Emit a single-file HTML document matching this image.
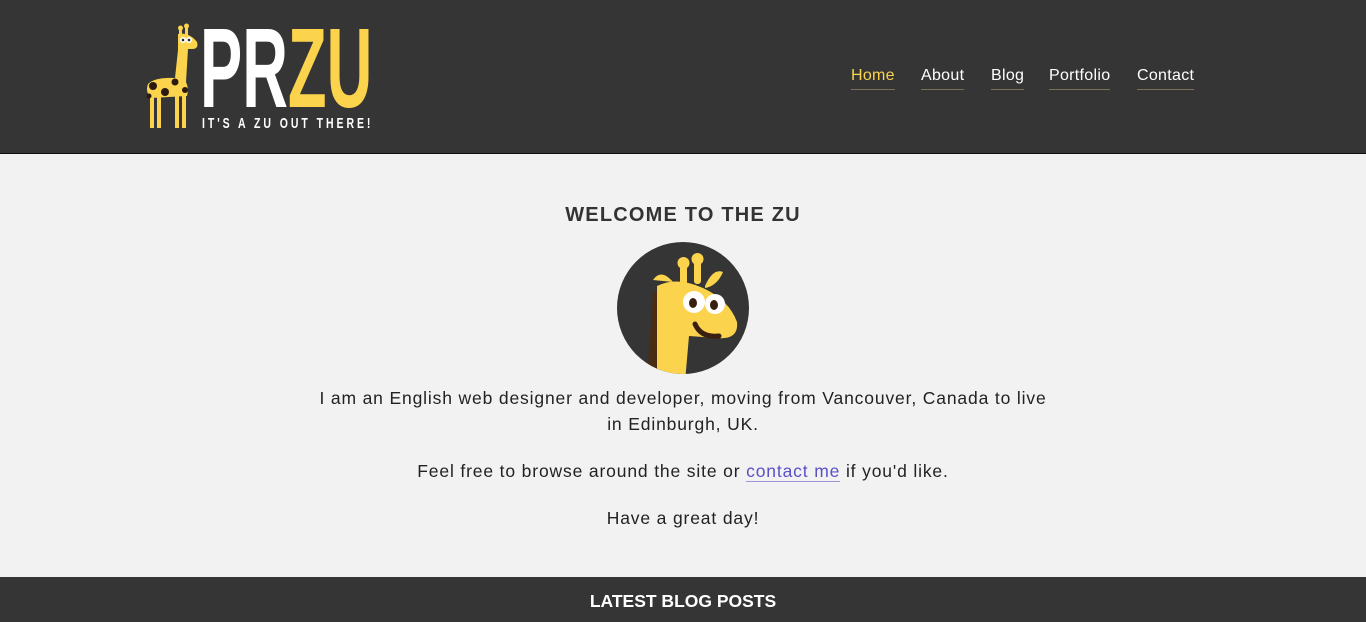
<!DOCTYPE html>
<html><head><meta charset="utf-8"><style>
*{margin:0;padding:0;box-sizing:border-box}
body{width:1366px;height:622px;overflow:hidden;background:#f2f2f2;font-family:"Liberation Sans",sans-serif;color:#222}
header{height:154px;background:#353535;border-bottom:1px solid #111;position:relative}
.logo{position:absolute;left:145px;top:22px}
.przu{position:absolute;left:200px;top:12px;font-size:113px;font-weight:bold;line-height:1;color:#fff;transform:scaleX(0.56);transform-origin:left top;white-space:nowrap}
.przu span{color:#fbd34d}
.tag{position:absolute;left:202px;top:115px;font-size:15px;font-weight:bold;color:#fff;letter-spacing:4.2px;white-space:nowrap;transform:scaleX(0.7);transform-origin:left top}
nav{position:absolute;top:67px;left:851px;font-size:16px;letter-spacing:0.3px}
nav a{position:absolute;color:#fff;text-decoration:none;border-bottom:1px solid #7a7055;padding-bottom:4px;white-space:nowrap}
h1{position:absolute;top:204px;width:100%;text-align:center;font-size:20px;font-weight:bold;color:#333;letter-spacing:1.2px}
.p{position:absolute;width:100%;text-align:center;font-size:17.5px;letter-spacing:0.85px;color:#222;line-height:26px;white-space:nowrap}
.p a{color:#5a50c8;text-decoration:none;border-bottom:1px solid #9a94d8}
footer{position:absolute;top:577px;left:0;width:1366px;height:45px;background:#353535;color:#fff;text-align:center;font-weight:bold;font-size:17.5px;padding-top:14px}
</style></head><body>
<header>
<svg class="logo" width="60" height="110" viewBox="0 0 60 110">
<g fill="#fbd34d">
<rect x="34" y="6" width="3" height="10"/><rect x="40" y="4" width="3" height="12"/>
<circle cx="35.5" cy="6" r="2.5"/><circle cx="41.5" cy="4" r="2.5"/>
<path d="M33 12 Q44 10 52 20 Q54 27 47 27 L43 27 L41 60 Q44 66 42 74 L6 76 Q0 70 3 62 Q10 55 30 56 L33 28 Z"/>
<rect x="5" y="72" width="4" height="34"/><rect x="12" y="72" width="4" height="34"/><rect x="30" y="72" width="4" height="34"/><rect x="37" y="72" width="4" height="34"/>
</g>
<g fill="#2a1a10"><circle cx="8" cy="64" r="4"/><circle cx="20" cy="70" r="4"/><circle cx="30" cy="60" r="3.5"/><circle cx="40" cy="68" r="3"/><circle cx="4" cy="74" r="2.5"/></g>
<circle cx="38" cy="18" r="3" fill="#fff"/><circle cx="44" cy="18" r="3" fill="#fff"/>
<circle cx="38" cy="18" r="1.3" fill="#222"/><circle cx="44" cy="18" r="1.3" fill="#222"/>
</svg>
<div class="przu">PR<span>ZU</span></div>
<div class="tag">IT'S A ZU OUT THERE!</div>
<nav>
<a style="left:0;color:#fbd34d">Home</a>
<a style="left:70px">About</a>
<a style="left:140px">Blog</a>
<a style="left:198px">Portfolio</a>
<a style="left:286px">Contact</a>
</nav>
</header>
<h1>WELCOME TO THE ZU</h1>
<svg style="position:absolute;left:617px;top:242px" width="132" height="132" viewBox="0 0 132 132">
<defs><clipPath id="c"><circle cx="66" cy="66" r="66"/></clipPath></defs>
<circle cx="66" cy="66" r="66" fill="#353535"/>
<g clip-path="url(#c)">
<path d="M36 50 L48 48 L40 140 L30 140 Z" fill="#4a2c12"/>
<g fill="#fbd34d">
<rect x="63" y="20" width="7" height="24" rx="3"/><rect x="77" y="16" width="7" height="26" rx="3"/>
<circle cx="66.5" cy="21" r="6"/><circle cx="80.5" cy="17" r="6"/>
<path d="M36 38 Q44 26 56 40 Z"/><path d="M88 44 Q96 26 106 30 Q100 44 88 46 Z"/>
<path d="M40 44 Q60 34 86 46 Q112 58 120 80 Q122 98 100 96 L72 94 L68 140 L40 140 Z"/>
</g>
<circle cx="77" cy="60" r="11" fill="#fff"/><circle cx="98" cy="62" r="10" fill="#fff"/>
<ellipse cx="76" cy="61" rx="4" ry="5" fill="#3a2010"/><ellipse cx="97" cy="63" rx="4" ry="5" fill="#3a2010"/>
<path d="M78 82 Q84 96 102 94" stroke="#3a2010" stroke-width="5" fill="none" stroke-linecap="round"/>
</g>
</svg>
<div class="p" style="top:385px">I am an English web designer and developer, moving from Vancouver, Canada to live<br>in Edinburgh, UK.</div>
<div class="p" style="top:458px">Feel free to browse around the site or <a>contact me</a> if you'd like.</div>
<div class="p" style="top:505px">Have a great day!</div>
<footer>LATEST BLOG POSTS</footer>
</body></html>
